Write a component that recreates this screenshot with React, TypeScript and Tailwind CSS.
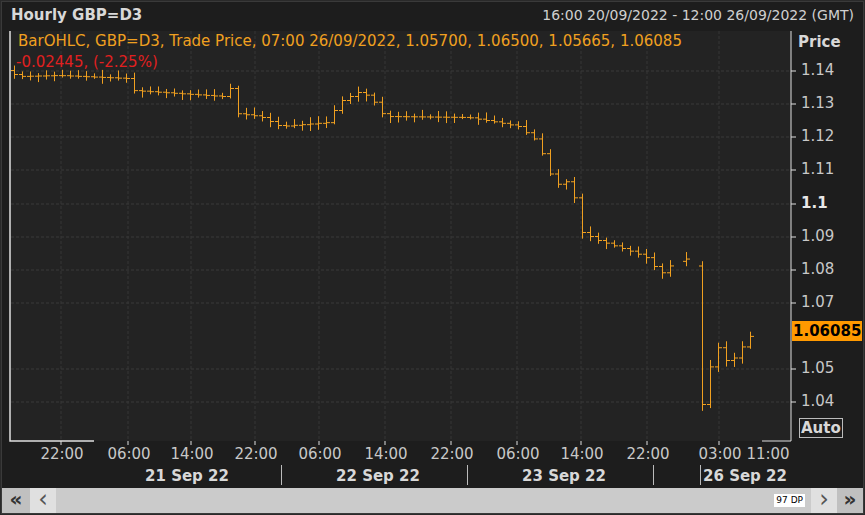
import React from "react";

const kp: [number, number][] = [
  [4, 68], [20, 76], [60, 75], [128, 78], [134, 90], [224, 96], [232, 88], [238, 113], [262, 116], [282, 126], [330, 122], [340, 102], [360, 92], [372, 96], [386, 116], [470, 117], [500, 122], [520, 126], [538, 140], [548, 162], [556, 185], [572, 180], [584, 232], [600, 240], [636, 252], [650, 258], [662, 274], [676, 262], [690, 258], [698, 268], [702, 400], [708, 412], [713, 355], [722, 345], [730, 365], [738, 355], [745, 345], [755, 332],
];
function interp(x: number) {
  if (x <= kp[0][0]) return kp[0][1];
  for (let i = 0; i < kp.length - 1; i++) {
    const [x0, y0] = kp[i], [x1, y1] = kp[i + 1];
    if (x >= x0 && x <= x1) return y0 + ((y1 - y0) * (x - x0)) / (x1 - x0);
  }
  return kp[kp.length - 1][1];
}
let seed = 7;
const rnd = () => { seed = (seed * 9301 + 49297) % 233280; return seed / 233280; };
const bars: { x: number; o: number; c: number; h: number; l: number }[] = [];
for (let x = 12; x <= 750; x += 8) {
  if (x > 662 && x < 700 && (x - 12) % 16 === 8) continue;
  const o = interp(x - 4), c = interp(x + 4);
  const h = Math.min(o, c) - 2 - rnd() * 5;
  const l = Math.max(o, c) + 2 + rnd() * 5;
  bars.push({ x, o, c, h, l });
}
const prices = [["1.14", 71], ["1.13", 104], ["1.12", 137], ["1.11", 170], ["1.1", 204], ["1.09", 237], ["1.08", 270], ["1.07", 303], ["1.05", 369], ["1.04", 402]] as [string, number][];
const times = [["22:00", 60], ["06:00", 127], ["14:00", 190], ["22:00", 254], ["06:00", 318], ["14:00", 384], ["22:00", 450], ["06:00", 516], ["14:00", 580], ["22:00", 646], ["03:00", 718], ["11:00", 766]] as [string, number][];
const gridX = [60, 127, 190, 254, 318, 384, 450, 516, 580, 646, 718];

export default function App() {
  return (
    <div className="w-[865px] h-[515px] bg-[#2a2a2a] p-[1px] overflow-hidden" style={{ fontFamily: "'DejaVu Sans', sans-serif" }}>
      <div className="w-full h-full bg-[#1d1d1d] border border-[#3a3a3a] flex flex-col">
        <div className="h-[27px] flex items-center justify-between px-[9px] text-[15px]">
          <span className="font-bold text-[#d8d8d8]">Hourly GBP=D3</span>
          <span className="text-[#d0d0d0] text-[14px]">16:00 20/09/2022 - 12:00 26/09/2022 (GMT)</span>
        </div>
        <div className="relative flex-1">
          <svg width="863" height="456" className="absolute left-0 top-0">
            <rect x="8" y="2" width="781" height="410" fill="#232323" />
            {prices.map(([p, y]) => (
              <line key={p} x1="9" x2="789" y1={y - 29} y2={y - 29} stroke="#3a3a3a" strokeDasharray="3 2" />
            ))}
            {gridX.map((x) => (
              <line key={x} x1={x - 1} x2={x - 1} y1="2" y2="412" stroke="#363636" strokeDasharray="3 2" />
            ))}
            <polyline points="8,2 8,412 92,412" fill="none" stroke="#e0e0e0" strokeWidth="1.5" />
            <line x1="789" y1="2" x2="789" y2="412" stroke="#e0e0e0" />
            <line x1="760" y1="412" x2="789" y2="412" stroke="#e0e0e0" />
            {bars.map((b, i) => (
              <g key={i} stroke="#f0a020" strokeWidth="1">
                <line x1={b.x + 0.5} x2={b.x + 0.5} y1={b.h - 29} y2={b.l - 29} />
                <line x1={b.x - 3} x2={b.x + 0.5} y1={b.o - 29 + 0.5} y2={b.o - 29 + 0.5} />
                <line x1={b.x + 0.5} x2={b.x + 4} y1={b.c - 29 + 0.5} y2={b.c - 29 + 0.5} />
              </g>
            ))}
            {prices.map(([p, y]) => (
              <line key={"t" + p} x1="789" x2="794" y1={y - 29} y2={y - 29} stroke="#e0e0e0" />
            ))}
            {gridX.map((x) => (
              <line key={"tx" + x} x1={x - 1} x2={x - 1} y1="412" y2="416" stroke="#e0e0e0" />
            ))}
          </svg>
          <div className="absolute left-[16px] top-[2px] text-[15px] leading-[21px]">
            <div className="text-[#f0a020]">BarOHLC, GBP=D3, Trade Price, 07:00 26/09/2022, 1.05700, 1.06500, 1.05665, 1.06085</div>
            <div className="text-[#e02020] -ml-[2px]">-0.02445, (-2.25%)</div>
          </div>
          <div className="absolute left-[796px] top-[2px] text-[15px] font-bold text-[#d8d8d8]">Price</div>
          {prices.map(([p, y]) => (
            <div key={p} className={`absolute left-[799px] text-[15px] leading-none ${p === "1.1" ? "font-bold text-[#e8e8e8]" : "text-[#c8c8c8]"}`} style={{ top: y - 29 - 8 }}>{p}</div>
          ))}
          <div className="absolute left-[790px] top-[292px] bg-[#ff9900] text-black font-bold text-[15px] leading-[20px] px-[1px]">1.06085</div>
          <div className="absolute left-[797px] top-[389px] border border-[#bbb] text-[#d8d8d8] font-bold text-[15px] leading-[18px] px-[1px]">Auto</div>
          {times.map(([t, x], i) => (
            <div key={i} className="absolute text-[15px] text-[#c8c8c8] -translate-x-1/2 leading-none" style={{ left: x, top: 418 }}>{t}</div>
          ))}
          {[["21 Sep 22", 185], ["22 Sep 22", 376], ["23 Sep 22", 562], ["26 Sep 22", 743]].map(([d, x]) => (
            <div key={d as string} className="absolute text-[15px] font-bold text-[#d8d8d8] -translate-x-1/2 leading-none" style={{ left: x as number, top: 440 }}>{d}</div>
          ))}
          {[279, 465, 651, 698].map((x) => (
            <div key={x} className="absolute w-px h-[20px] bg-[#bbb]" style={{ left: x, top: 436 }} />
          ))}
        </div>
        <div className="h-[25px] bg-[#cbcbcb] flex items-center text-[#333]">
          <div className="w-[28px] h-full bg-[#c0c0c0] flex items-center justify-center font-bold text-[20px] leading-none pb-[3px]">«</div>
          <div className="w-[26px] h-full bg-[#e0e0e0] flex items-center justify-center text-[24px] leading-none pb-[4px] text-[#555]">‹</div>
          <div className="flex-1 flex justify-end pr-[6px]">
            <span className="bg-white text-[9px] text-black px-[2px] leading-[13px]">97 DP</span>
          </div>
          <div className="w-[26px] h-full bg-[#e0e0e0] flex items-center justify-center text-[24px] leading-none pb-[4px] text-[#555]">›</div>
          <div className="w-[26px] h-full bg-[#c0c0c0] flex items-center justify-center font-bold text-[20px] leading-none pb-[3px]">»</div>
        </div>
      </div>
    </div>
  );
}
